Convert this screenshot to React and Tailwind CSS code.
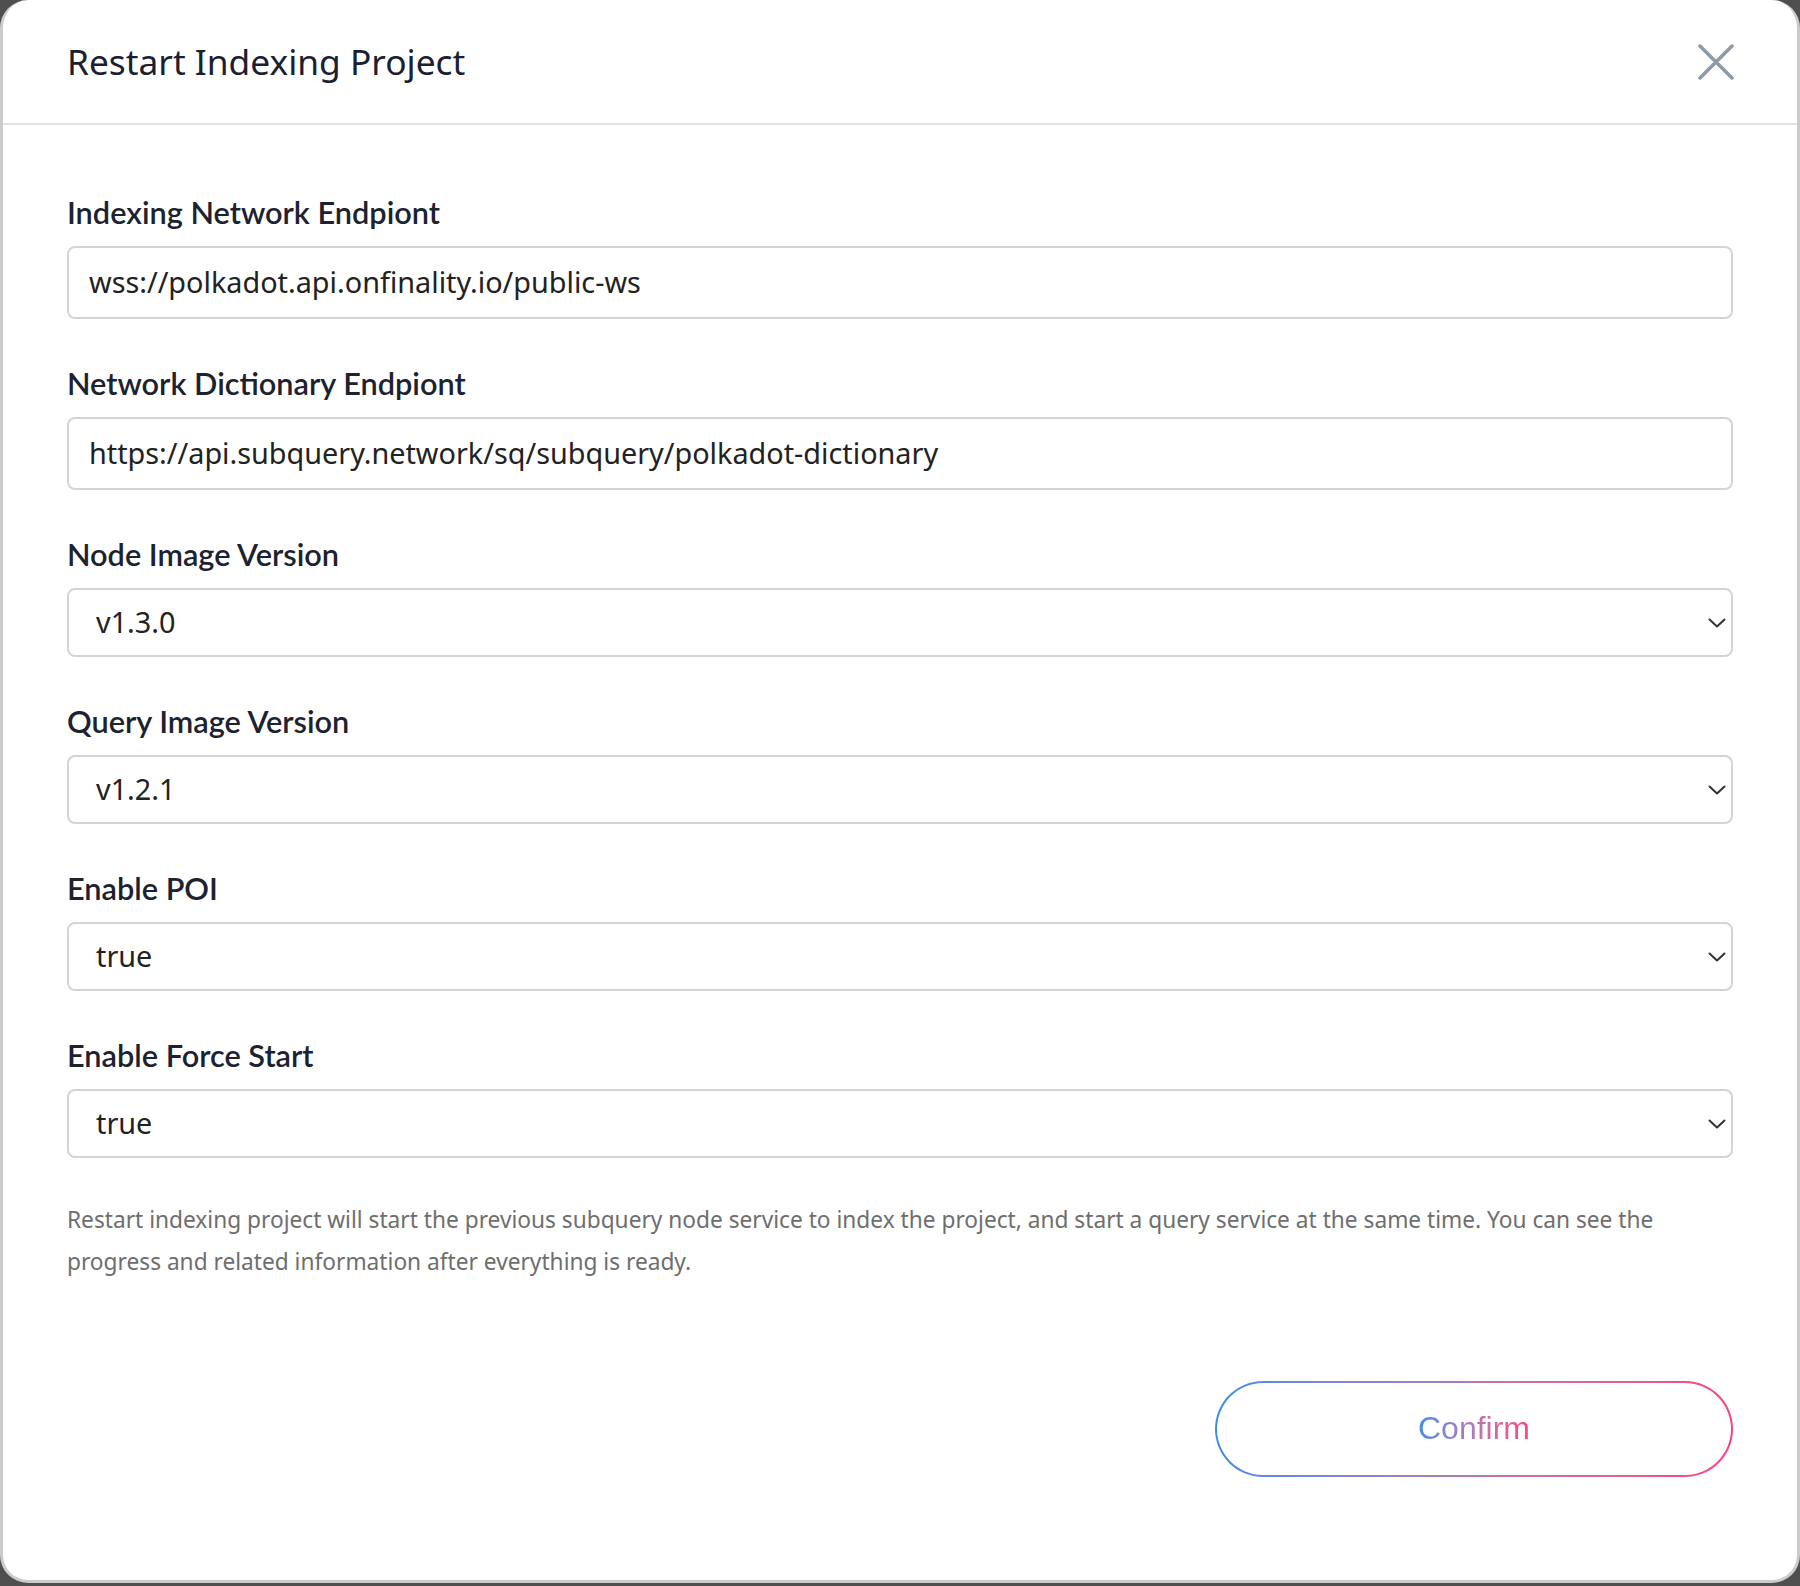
import React from "react";

const labelCls =
  "block text-[30.7px] leading-[36px] font-semibold text-[#1c2230] mb-[15px]";
const bodyFont = { fontFamily: '"Noto Sans", "Open Sans", sans-serif' };
const labelFont = { fontFamily: 'Lato, "Noto Sans", sans-serif' };

function TextField({ label, value }) {
  return (
    <div className="flex flex-col">
      <div className={labelCls} style={labelFont}>{label}</div>
      <div className="h-[73px] rounded-[8px] border-2 border-[#d4d4d4] bg-white flex items-center px-[20px]">
        <span className="text-[28.8px] text-[#222222] leading-none" style={bodyFont}>{value}</span>
      </div>
    </div>
  );
}

function SelectField({ label, value }) {
  return (
    <div className="flex flex-col">
      <div className={labelCls} style={labelFont}>{label}</div>
      <div className="h-[69px] rounded-[8px] border-2 border-[#d4d4d4] bg-white flex items-center justify-between pl-[27px] pr-[5px]">
        <span className="text-[28.8px] text-[#222222] leading-none" style={bodyFont}>{value}</span>
        <svg width="18" height="10" viewBox="0 0 18 10" fill="none">
          <path d="M1.5 1.5 L9 8.5 L16.5 1.5" stroke="#333333" strokeWidth="2" strokeLinecap="round" strokeLinejoin="round" />
        </svg>
      </div>
    </div>
  );
}

export default function App() {
  return (
    <div className="w-[1800px] h-[1586px] bg-[#4e4e4e]">
      <div className="w-[1800px] h-[1583px] bg-white rounded-[28px] border-x-[3px] border-b-[3px] border-[#cbcbcb] flex flex-col overflow-hidden">
        <div className="h-[125px] shrink-0 border-b-2 border-[#e0e4e8] flex items-center justify-between pl-[64px] pr-[64px]">
          <h1 className="text-[35.3px] text-[#1a2030] font-normal leading-none" style={bodyFont}>
            Restart Indexing Project
          </h1>
          <svg width="36" height="36" viewBox="0 0 36 36" fill="none" className="mr-[-1px]">
            <path d="M2 2 L34 34 M34 2 L2 34" stroke="#8e9aa7" strokeWidth="3.5" strokeLinecap="round" />
          </svg>
        </div>
        <div className="flex flex-col px-[64px] pt-[70px]">
          <div className="flex flex-col gap-[47px]">
            <TextField label="Indexing Network Endpiont" value="wss://polkadot.api.onfinality.io/public-ws" />
            <TextField label="Network Dictionary Endpiont" value="https://api.subquery.network/sq/subquery/polkadot-dictionary" />
            <SelectField label="Node Image Version" value="v1.3.0" />
            <SelectField label="Query Image Version" value="v1.2.1" />
            <SelectField label="Enable POI" value="true" />
            <SelectField label="Enable Force Start" value="true" />
          </div>
          <p className="mt-[41px] text-[22.7px] leading-[42px] text-[#6e6e6e]" style={bodyFont}>
            Restart indexing project will start the previous subquery node service to index the project, and start a query service at the same time. You can see the
            <br />
            progress and related information after everything is ready.
          </p>
          <div className="flex justify-end mt-[98px]">
            <div className="w-[518px] h-[96px] rounded-full bg-linear-to-r from-[#3a8ee6] to-[#ff3d7c] p-[2px]">
              <div className="w-full h-full rounded-full bg-white flex items-center justify-center">
                <span
                  className="inline-block text-[32px] leading-none bg-linear-to-r from-[#3a8ee6] to-[#ff3d7c] bg-clip-text text-transparent pb-[2px]"
                  style={{ fontFamily: '"Liberation Sans", Arial, sans-serif' }}
                >
                  Confirm
                </span>
              </div>
            </div>
          </div>
        </div>
      </div>
    </div>
  );
}
